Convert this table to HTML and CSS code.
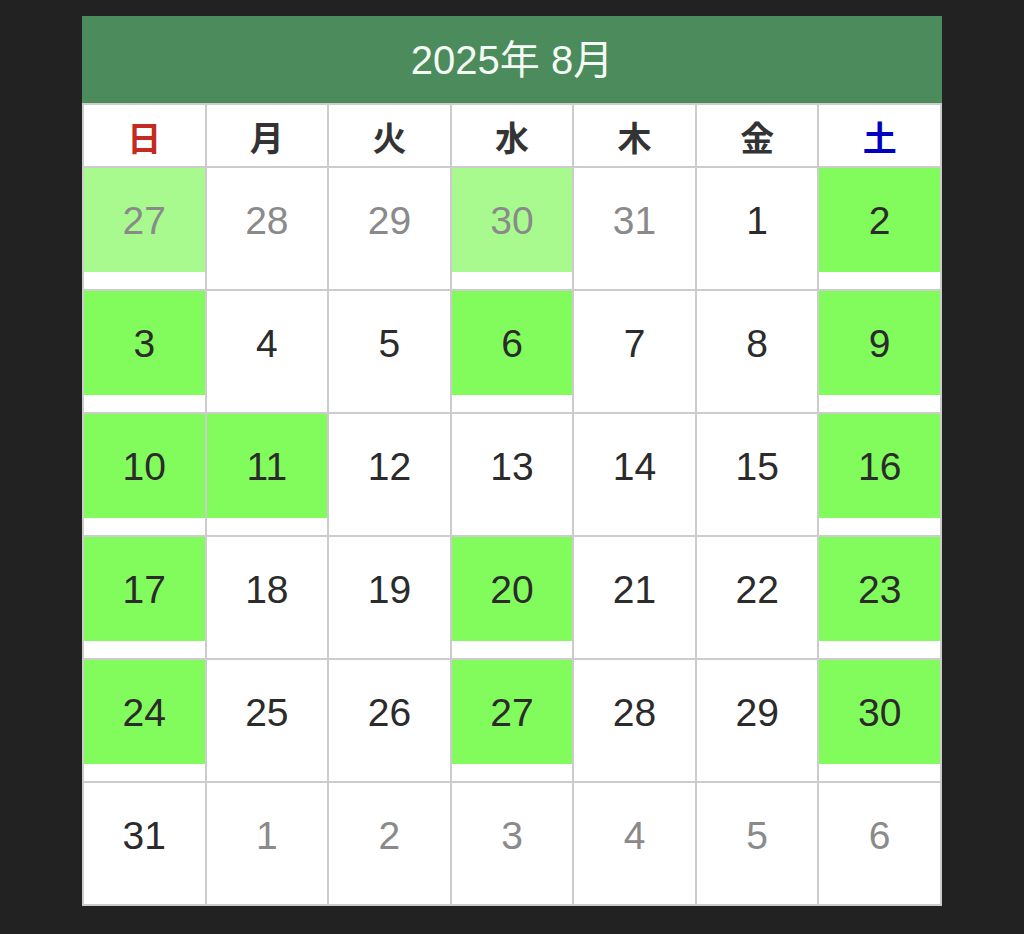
FILE: index.html
```html
<!DOCTYPE html>
<html lang="ja">
<head>
<meta charset="utf-8">
<title>2025年 8月</title>
<link rel="stylesheet" href="styles.css">
</head>
<body>
<div class="calendar">
  <div class="cal-header">2025年 8月</div>
  <div class="cal-grid">
    <div class="wd sun">日</div>
    <div class="wd">月</div>
    <div class="wd">火</div>
    <div class="wd">水</div>
    <div class="wd">木</div>
    <div class="wd">金</div>
    <div class="wd sat">土</div>

    <div class="day"><div class="num other light">27</div></div>
    <div class="day"><div class="num other">28</div></div>
    <div class="day"><div class="num other">29</div></div>
    <div class="day"><div class="num other light">30</div></div>
    <div class="day"><div class="num other">31</div></div>
    <div class="day"><div class="num">1</div></div>
    <div class="day"><div class="num hl">2</div></div>

    <div class="day"><div class="num hl">3</div></div>
    <div class="day"><div class="num">4</div></div>
    <div class="day"><div class="num">5</div></div>
    <div class="day"><div class="num hl">6</div></div>
    <div class="day"><div class="num">7</div></div>
    <div class="day"><div class="num">8</div></div>
    <div class="day"><div class="num hl">9</div></div>

    <div class="day"><div class="num hl">10</div></div>
    <div class="day"><div class="num hl">11</div></div>
    <div class="day"><div class="num">12</div></div>
    <div class="day"><div class="num">13</div></div>
    <div class="day"><div class="num">14</div></div>
    <div class="day"><div class="num">15</div></div>
    <div class="day"><div class="num hl">16</div></div>

    <div class="day"><div class="num hl">17</div></div>
    <div class="day"><div class="num">18</div></div>
    <div class="day"><div class="num">19</div></div>
    <div class="day"><div class="num hl">20</div></div>
    <div class="day"><div class="num">21</div></div>
    <div class="day"><div class="num">22</div></div>
    <div class="day"><div class="num hl">23</div></div>

    <div class="day"><div class="num hl">24</div></div>
    <div class="day"><div class="num">25</div></div>
    <div class="day"><div class="num">26</div></div>
    <div class="day"><div class="num hl">27</div></div>
    <div class="day"><div class="num">28</div></div>
    <div class="day"><div class="num">29</div></div>
    <div class="day"><div class="num hl">30</div></div>

    <div class="day"><div class="num">31</div></div>
    <div class="day"><div class="num other">1</div></div>
    <div class="day"><div class="num other">2</div></div>
    <div class="day"><div class="num other">3</div></div>
    <div class="day"><div class="num other">4</div></div>
    <div class="day"><div class="num other">5</div></div>
    <div class="day"><div class="num other">6</div></div>
  </div>
</div>
</body>
</html>
```
FILE: styles.css
```css
html, body {
  margin: 0;
  padding: 0;
  background: #222222;
}
body {
  font-family: "Liberation Sans", "Noto Sans CJK JP", sans-serif;
}
.calendar {
  width: 860px;
  margin: 16px auto 0;
}
.cal-header {
  height: 87px;
  background: #4b8b5c;
  color: #f4fbf4;
  font-size: 40px;
  display: flex;
  align-items: center;
  justify-content: center;
  padding-bottom: 6px;
  box-sizing: border-box;
}
.cal-grid {
  display: grid;
  grid-template-columns: repeat(7, 1fr);
  grid-template-rows: 61px repeat(6, 121px);
  gap: 2px;
  padding: 2px;
  background: #cccccc;
}
.wd {
  background: #ffffff;
  display: flex;
  align-items: center;
  justify-content: center;
  font-family: "Noto Sans CJK JP", sans-serif;
  font-weight: 700;
  font-size: 34px;
  color: #333333;
  padding-top: 1px;
  box-sizing: border-box;
}
.wd.sun { color: #c42a22; }
.wd.sat { color: #0000c0; }
.day {
  background: #ffffff;
}
.num {
  height: 104px;
  display: flex;
  align-items: center;
  justify-content: center;
  font-size: 39px;
  color: #2b2b2b;
  padding-top: 2px;
  box-sizing: border-box;
}
.num.other { color: #8a8a8a; }
.num.hl { background: #82fb5c; }
.num.light { background: #a8fa8e; }
```
